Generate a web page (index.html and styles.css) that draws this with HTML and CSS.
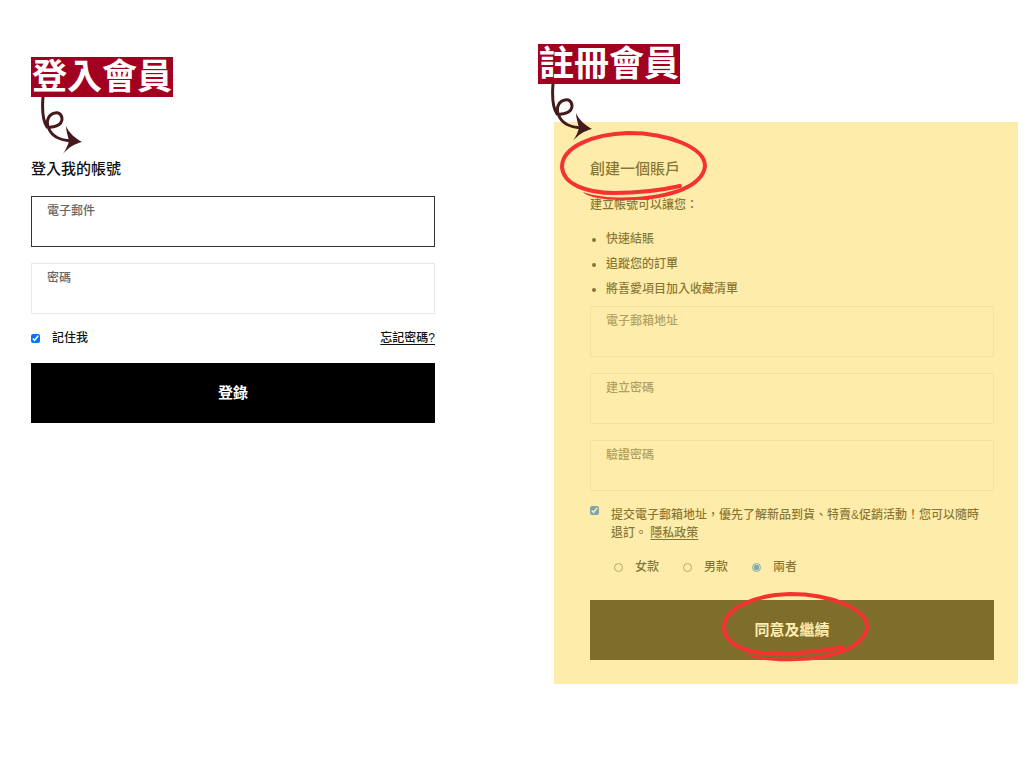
FILE: index.html
```html
<!DOCTYPE html>
<html lang="zh-Hant">
<head>
<meta charset="utf-8">
<meta name="viewport" content="width=device-width, initial-scale=1">
<title>會員登入與註冊</title>
<link rel="stylesheet" href="styles.css">
</head>
<body>
<svg class="symbols" aria-hidden="true">
  <symbol id="arrow" viewBox="0 0 46 58">
    <path d="M6 0C5 12 6 24 10 30C17 31 25 28 25 22C25 17 21 15 18 16C12 17 8 24 12 32C15 39 22 43 34 44" fill="none" stroke="#451a1c" stroke-width="3"/>
    <path d="M29 29C32 36 38 41 45 45C37 47 31 51 26 57C29 52 31 48 32 44C31 39 29 34 29 29Z" fill="#451a1c"/>
  </symbol>
  <symbol id="ring" viewBox="0 0 148 70">
    <path d="M120 55C98 60 76 62 54 62C26 62 3 53 2 36C2 16 33 3 68 2C109 2 145 17 145 35" fill="none" stroke="#f53232" stroke-width="4" stroke-linecap="round"/>
    <path d="M147 35C145 57 110 69 74 69C50 70 28 67 23 61C40 67 60 67 76 66C108 64 141 54 143 35Z" fill="#f53232"/>
  </symbol>
</svg>
<main class="page">
  <section class="login">
    <h1 class="tag">登入會員</h1>
    <svg class="arrow" aria-hidden="true"><use href="#arrow"/></svg>
    <form class="form">
      <h2 class="heading">登入我的帳號</h2>
      <div class="fields">
        <div class="field field-active"><label for="email">電子郵件</label><input id="email" type="email"></div>
        <div class="field"><label for="password">密碼</label><input id="password" type="password"></div>
      </div>
      <div class="options">
        <label class="choice"><input type="checkbox" checked>記住我</label>
        <a href="#forgot">忘記密碼?</a>
      </div>
      <button class="submit" type="button">登錄</button>
    </form>
  </section>
  <section class="register">
    <h1 class="tag">註冊會員</h1>
    <svg class="arrow" aria-hidden="true"><use href="#arrow"/></svg>
    <form class="form panel">
      <h2 class="heading ringed">創建一個賬戶<svg class="ring" aria-hidden="true"><use href="#ring"/></svg></h2>
      <p class="intro">建立帳號可以讓您：</p>
      <ul class="benefits">
        <li>快速結賬</li>
        <li>追蹤您的訂單</li>
        <li>將喜愛項目加入收藏清單</li>
      </ul>
      <div class="fields">
        <div class="field"><label for="new-email">電子郵箱地址</label><input id="new-email" type="email"></div>
        <div class="field"><label for="new-password">建立密碼</label><input id="new-password" type="password"></div>
        <div class="field"><label for="confirm">驗證密碼</label><input id="confirm" type="password"></div>
      </div>
      <div class="consent">
        <input id="consent" type="checkbox" checked>
        <label for="consent">提交電子郵箱地址，優先了解新品到貨、特賣&amp;促銷活動！您可以隨時退訂。 <a href="#privacy">隱私政策</a></label>
      </div>
      <div class="genders">
        <label class="choice"><input type="radio" name="style">女款</label>
        <label class="choice"><input type="radio" name="style">男款</label>
        <label class="choice"><input type="radio" name="style" checked>兩者</label>
      </div>
      <div class="action">
        <button class="submit" type="button">同意及繼續</button>
        <svg class="ring" aria-hidden="true"><use href="#ring"/></svg>
      </div>
    </form>
  </section>
</main>
</body>
</html>
```
FILE: styles.css
```css
* { box-sizing: border-box; }
body {
  margin: 0;
  background: #fff;
  color: #111;
  font: 500 12px/18px "Liberation Sans", "Noto Sans CJK TC", sans-serif;
}
h1, h2, p, ul { margin: 0; }
a { color: inherit; text-underline-offset: 2px; }
.symbols { position: absolute; width: 0; height: 0; }
.page {
  display: grid;
  grid-template-columns: 404fr 480fr;
  column-gap: 103px;
  align-items: start;
  padding: 44px 6px 44px 31px;
}
.login { padding-top: 13px; }
.tag {
  width: max-content;
  padding: 0 1px;
  background: #a20021;
  color: #fff;
  font-size: 35px;
  font-weight: 700;
  line-height: 40px;
}
.arrow {
  display: block;
  position: relative;
  z-index: 3;
  width: 46px;
  height: 58px;
  margin-left: 6px;
}
.register .arrow { margin-left: 9px; }
.heading { font-size: 15px; font-weight: 500; line-height: 20px; }
.login .heading { margin: 4px 0 17px; }
.fields { display: grid; gap: 16px; }
.field {
  display: flex;
  flex-direction: column;
  height: 51px;
  padding: 4px 15px;
  border: 1px solid #e8e8e8;
  color: #666;
}
.field-active { border-color: #333; }
.field label { line-height: 20px; }
.field input {
  width: 100%;
  height: 20px;
  padding: 0;
  border: 0;
  outline: 0;
  background: none;
  font: inherit;
}
.options { display: flex; justify-content: space-between; padding: 15px 0 16px; }
.choice { display: flex; align-items: center; gap: 12px; }
input[type="checkbox"], input[type="radio"] {
  flex: none;
  width: 9px;
  height: 9px;
  margin: 0;
  accent-color: #0075ff;
}
.submit {
  display: block;
  width: 100%;
  height: 60px;
  border: 0;
  background: #000;
  color: #fff;
  font: 700 15px/20px "Liberation Sans", "Noto Sans CJK TC", sans-serif;
}
.panel {
  position: relative;
  margin: -20px 0 0 16px;
  padding: 37px 24px 24px 36px;
}
.panel::after {
  content: "";
  position: absolute;
  inset: 0;
  z-index: 1;
  background: rgba(254, 217, 88, 0.5);
  pointer-events: none;
}
.ringed { position: relative; width: max-content; }
.ring {
  position: absolute;
  z-index: 2;
  width: 148px;
  height: 70px;
  pointer-events: none;
}
.ringed .ring { top: -28px; left: -30px; }
.intro { padding-top: 17px; }
.benefits { padding: 13px 0 4px 16px; line-height: 25px; }
.consent { display: flex; gap: 12px; padding-top: 15px; }
.consent label { padding-right: 8px; }
.genders { display: flex; gap: 24px; padding: 16px 0 24px 24px; }
.action { position: relative; }
.action .ring { top: -8px; left: calc(50% - 70px); }
```
